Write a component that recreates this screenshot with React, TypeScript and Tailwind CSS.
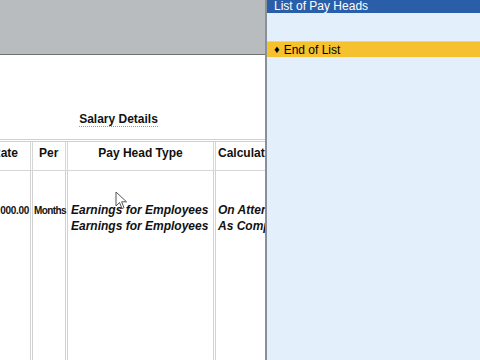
import React from 'react'

const font = { fontFamily: '"Liberation Sans", Arial, sans-serif' }

function Cursor() {
  return (
    <svg
      className="absolute left-[115px] top-[191px]"
      width="14"
      height="20"
      viewBox="0 0 14 20"
    >
      <path
        d="M1 1 L1 15 L4.5 11.5 L7 17.5 L9 16.7 L6.6 10.8 L11.5 10.8 Z"
        fill="#ffffff"
        stroke="#555"
        strokeWidth="1"
        strokeLinejoin="round"
      />
    </svg>
  )
}

function PayHeadsPanel() {
  return (
    <div className="w-[215px] h-full flex flex-col bg-[#e3f0fb] border-l-2 border-[#8a9099]">
      <div className="h-[13px] bg-[#2b5ea9] text-white text-[12px] leading-[13px] pl-[7px] overflow-hidden">
        List of Pay Heads
      </div>
      <div className="h-[29px] border-b border-[#c9d4dd]" />
      <div className="h-[15px] bg-[#f6c12e] flex items-center text-[12px] text-black pl-[7px] gap-[4px]">
        <span className="text-[11px] leading-none">♦</span>
        <span>End of List</span>
      </div>
      <div className="flex-1" />
    </div>
  )
}

function SalaryTable() {
  const col = 'border-r-[3px] border-double border-[#d2d2d2]'
  return (
    <div className="flex-1 flex flex-col">
      <div className="h-[84px] flex justify-center items-end pb-[12px] pr-[28px]">
        <span className="text-[12px] font-bold text-[#111] border-b border-dotted border-[#999] leading-[14px]">
          Salary Details
        </span>
      </div>
      <div className="border-t-[3px] border-double border-[#cfcfcf] flex-1 grid grid-cols-[33px_35px_148px_1fr] grid-rows-[29px_1fr] text-[12px] font-bold text-[#111]">
        <div className={`${col} border-b border-[#d6d6d6] overflow-hidden pt-[2px] relative`}>
          <span className="absolute left-[-8px]">Rate</span>
        </div>
        <div className={`${col} border-b border-[#d6d6d6] pt-[2px] pl-[6px]`}>Per</div>
        <div className={`${col} border-b border-[#d6d6d6] pt-[2px] text-center`}>Pay Head Type</div>
        <div className="border-b border-[#d6d6d6] pt-[2px] pl-[2px] overflow-hidden whitespace-nowrap">
          Calculation
        </div>

        <div className={`${col} relative overflow-hidden`}>
          <span className="absolute right-[1px] top-[32px] text-[10px] tracking-[-0.3px]">000.00</span>
        </div>
        <div className={`${col} pt-[32px] text-[10px] tracking-[-0.6px] pl-[1px]`}>Months</div>
        <div className={`${col} pt-[31px] pl-[3px] italic leading-[16px]`}>
          <div>Earnings for Employees</div>
          <div>Earnings for Employees</div>
        </div>
        <div className="pt-[31px] pl-[2px] italic leading-[16px] overflow-hidden whitespace-nowrap">
          <div>On Attendance</div>
          <div>As Computed Value</div>
        </div>
      </div>
    </div>
  )
}

export default function App() {
  return (
    <div className="relative w-[480px] h-[360px] flex overflow-hidden bg-white" style={font}>
      <div className="w-[265px] h-full flex flex-col">
        <div className="h-[55px] bg-[#b8bcbe] border-b border-[#6d7370]" />
        <SalaryTable />
      </div>
      <PayHeadsPanel />
      <Cursor />
    </div>
  )
}
